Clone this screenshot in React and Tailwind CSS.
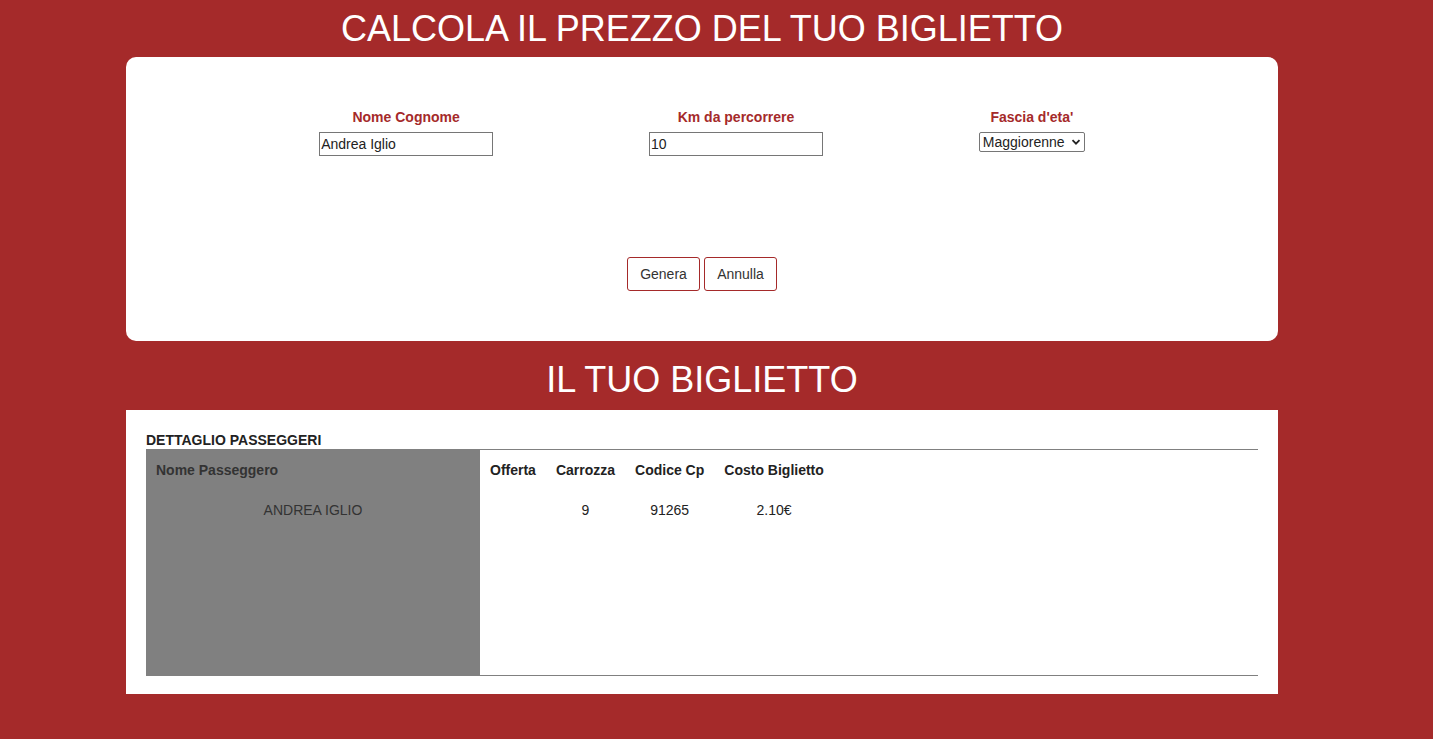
export default function App() {
  return (
    <div className="min-h-[739px] bg-[#a52a2a] pb-[45px] font-['Liberation_Sans',Arial,sans-serif]">
      <div className="ml-[126px] w-[1152px]">
        <h1 className="pt-[8px] text-center text-[36px] leading-[42px] text-white">CALCOLA IL PREZZO DEL TUO BIGLIETTO</h1>

        <div className="mt-[7px] h-[284px] rounded-[10px] bg-white pt-[52px]">
          <div className="mx-auto flex w-[80%] justify-around">
            <div className="flex flex-col items-center">
              <label className="text-[14px] font-bold leading-[16px] text-[#a52a2a]">Nome Cognome</label>
              <input
                type="text"
                defaultValue="Andrea Iglio"
                className="mt-[7px] h-[24px] w-[174px] border border-[#767676] px-[1px] text-[14px] text-[#222]"
              />
            </div>
            <div className="flex flex-col items-center">
              <label className="text-[14px] font-bold leading-[16px] text-[#a52a2a]">Km da percorrere</label>
              <input
                type="text"
                defaultValue="10"
                className="mt-[7px] h-[24px] w-[174px] border border-[#767676] px-[1px] text-[14px] text-[#222]"
              />
            </div>
            <div className="flex flex-col items-center">
              <label className="text-[14px] font-bold leading-[16px] text-[#a52a2a]">Fascia d'eta'</label>
              <div className="mt-[7px] flex h-[20px] w-[106px] items-center justify-between rounded-[2px] border border-[#767676] pl-[3px] pr-[3px] text-[14px] text-[#222]">
                <span>Maggiorenne</span>
                <svg width="10" height="10" viewBox="0 0 10 10">
                  <path d="M1.5 3.2 L5 6.7 L8.5 3.2" fill="none" stroke="#222" strokeWidth="1.8" />
                </svg>
              </div>
            </div>
          </div>

          <div className="mt-[101px] flex justify-center gap-[4px]">
            <button className="h-[34px] w-[73px] rounded-[3px] border border-[#a52a2a] bg-white text-[14px] text-[#333]">Genera</button>
            <button className="h-[34px] w-[73px] rounded-[3px] border border-[#a52a2a] bg-white text-[14px] text-[#333]">Annulla</button>
          </div>
        </div>

        <h2 className="mt-[18px] text-center text-[36px] leading-[42px] text-white">IL TUO BIGLIETTO</h2>

        <div className="mt-[9px] h-[284px] bg-white px-[20px] pt-[22px]">
          <div className="text-[14px] font-bold leading-[16px] text-[#222]">DETTAGLIO PASSEGGERI</div>
          <div className="mt-[1px] flex h-[227px] border-y border-[#808080]">
            <div className="w-[334px] bg-[#808080] text-[14px] text-[#333]">
              <div className="px-[10px] pt-[12px] font-bold leading-[16px]">Nome Passeggero</div>
              <div className="mt-[24px] text-center leading-[16px]">ANDREA IGLIO</div>
            </div>
            <div className="flex pl-[10px] text-[14px] text-[#222]">
              {[
                ['Offerta', ''],
                ['Carrozza', '9'],
                ['Codice Cp', '91265'],
                ['Costo Biglietto', '2.10€'],
              ].map(([h, v]) => (
                <div key={h} className="mr-[20px] flex flex-col items-center">
                  <div className="pt-[12px] font-bold leading-[16px]">{h}</div>
                  <div className="mt-[24px] h-[16px] leading-[16px]">{v}</div>
                </div>
              ))}
            </div>
          </div>
        </div>
      </div>
    </div>
  )
}
